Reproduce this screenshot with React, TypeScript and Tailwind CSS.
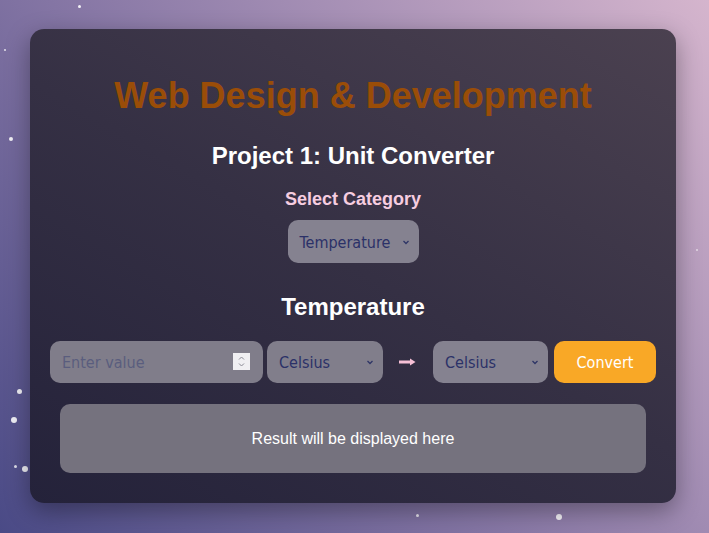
import React from "react";

const dots: { x: number; y: number; s: number; o: number }[] = [
  { x: 78, y: 5, s: 3, o: 0.9 },
  { x: 4, y: 49, s: 2, o: 0.8 },
  { x: 9, y: 137, s: 4, o: 0.9 },
  { x: 17, y: 389, s: 5, o: 0.9 },
  { x: 11, y: 417, s: 6, o: 0.9 },
  { x: 22, y: 466, s: 6, o: 0.9 },
  { x: 14, y: 465, s: 3, o: 0.8 },
  { x: 556, y: 514, s: 6, o: 0.9 },
  { x: 416, y: 514, s: 3, o: 0.8 },
  { x: 500, y: 494, s: 5, o: 0.5 },
  { x: 99, y: 63, s: 3, o: 0.4 },
  { x: 529, y: 54, s: 4, o: 0.4 },
  { x: 572, y: 64, s: 4, o: 0.4 },
  { x: 488, y: 235, s: 3, o: 0.4 },
  { x: 468, y: 262, s: 3, o: 0.4 },
  { x: 315, y: 255, s: 4, o: 0.4 },
  { x: 298, y: 381, s: 6, o: 0.35 },
  { x: 270, y: 443, s: 5, o: 0.35 },
  { x: 167, y: 404, s: 4, o: 0.35 },
  { x: 493, y: 340, s: 4, o: 0.35 },
  { x: 696, y: 249, s: 2, o: 0.6 },
  { x: 660, y: 386, s: 4, o: 0.5 },
  { x: 53, y: 369, s: 3, o: 0.4 },
];

function Chevron() {
  return (
    <svg width="10" height="10" viewBox="0 0 10 10" className="absolute right-[8px] top-1/2 -translate-y-1/2">
      <path d="M2.5 4 L5 6.5 L7.5 4" fill="none" stroke="#2e3566" strokeWidth="1.3" />
    </svg>
  );
}

export default function App() {
  const inputFont = { fontFamily: '"DejaVu Sans Condensed", "DejaVu Sans", sans-serif' };
  return (
    <div
      className="relative w-[709px] h-[533px] overflow-hidden"
      style={{
        background: "linear-gradient(51deg, #4a4a86 0%, #8878a6 45%, #d5b5cd 100%)",
      }}
    >
      {dots.map((d, i) => (
        <div
          key={i}
          className="absolute rounded-full bg-white"
          style={{ left: d.x, top: d.y, width: d.s, height: d.s, opacity: d.o }}
        />
      ))}
      <div className="relative pt-[29px] pl-[30px]">
        <div
          className="relative w-[646px] h-[474px] rounded-[14px] px-[20px] pt-[45px] shadow-[0_8px_24px_rgba(0,0,0,0.35)] overflow-hidden"
          style={{
            background: "linear-gradient(30deg, #24223a 0%, #353044 50%, #4b4150 100%)",
            fontFamily: '"Liberation Sans", Arial, sans-serif',
          }}
        >
          <h1 className="text-center text-[36px] leading-[44px] font-bold text-[#9a4d08]">
            Web Design &amp; Development
          </h1>
          <h2 className="mt-[23px] text-center text-[24px] leading-[30px] font-bold text-white">
            Project 1: Unit Converter
          </h2>
          <div className="mt-[17px] text-center text-[18px] leading-[22px] font-bold text-[#f6cde0]">
            Select Category
          </div>
          <div className="mt-[10px] flex justify-center">
            <div className="relative w-[131px] h-[43px] rounded-[10px] bg-[#858290]">
              <div
                className="pl-[12px] pt-[1px] leading-[43px] text-[16px] text-[#2b3168]"
                style={inputFont}
              >
                Temperature
              </div>
              <Chevron />
            </div>
          </div>
          <h2 className="mt-[29px] text-center text-[24px] leading-[30px] font-bold text-white">
            Temperature
          </h2>
          <div className="mt-[19px] flex items-center h-[42px]">
            <div className="relative w-[213px] h-[42px] rounded-[10px] bg-[#807d8a]">
              <div className="pl-[12px] pt-[1px] leading-[42px] text-[16px] text-[#5a5d7e]" style={inputFont}>
                Enter value
              </div>
              <div className="absolute left-[183px] top-[12px] w-[17px] h-[17px] bg-[#f0eff2] flex flex-col items-center justify-center">
                <svg width="9" height="13" viewBox="0 0 9 13">
                  <path d="M2 4.5 L4.5 2 L7 4.5" fill="none" stroke="#8a8a95" strokeWidth="1" />
                  <path d="M2 8.5 L4.5 11 L7 8.5" fill="none" stroke="#8a8a95" strokeWidth="1" />
                </svg>
              </div>
            </div>
            <div className="relative ml-[4px] w-[116px] h-[42px] rounded-[10px] bg-[#817e8b]">
              <div className="pl-[12px] pt-[1px] leading-[42px] text-[16px] text-[#2b3168]" style={inputFont}>
                Celsius
              </div>
              <Chevron />
            </div>
            <div className="w-[50px] flex justify-center">
              <svg width="18" height="10" viewBox="0 0 18 10">
                <path d="M0 5 H13" stroke="#f6c0d6" strokeWidth="3" />
                <path d="M11 1.5 L16.5 5 L11 8.5 Z" fill="#f6c0d6" />
              </svg>
            </div>
            <div className="relative w-[115px] h-[42px] rounded-[10px] bg-[#858290]">
              <div className="pl-[12px] pt-[1px] leading-[42px] text-[16px] text-[#2b3168]" style={inputFont}>
                Celsius
              </div>
              <Chevron />
            </div>
            <div
              className="ml-[6px] w-[102px] h-[42px] pt-[1px] rounded-[10px] bg-[#f9a826] text-white text-[16px] flex items-center justify-center"
              style={inputFont}
            >
              Convert
            </div>
          </div>
          <div className="mt-[21px] mx-[10px] h-[69px] rounded-[10px] bg-[#75727e] flex items-center justify-center text-white text-[16px]">
            Result will be displayed here
          </div>
        </div>
      </div>
    </div>
  );
}
